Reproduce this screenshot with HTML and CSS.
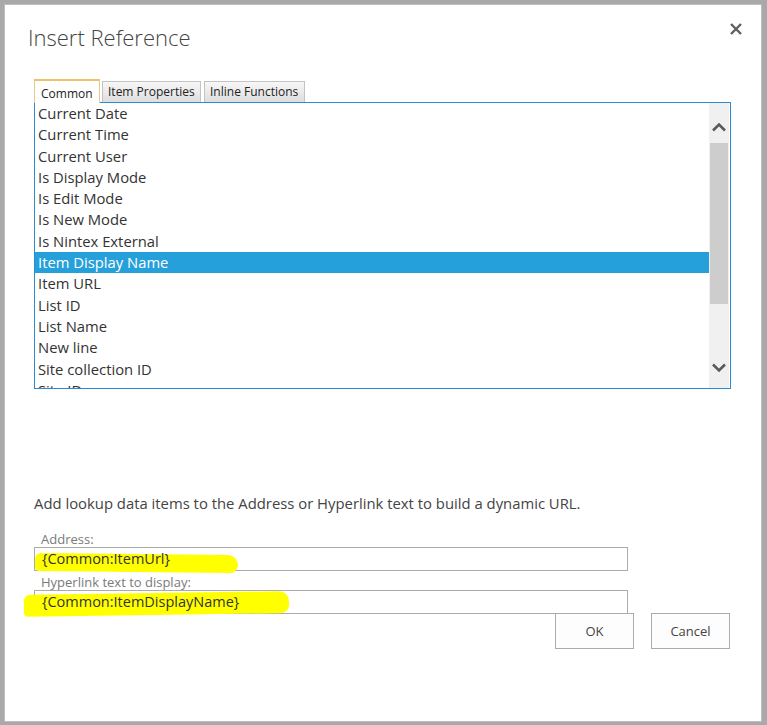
FILE: index.html
```html
<!DOCTYPE html>
<html>
<head>
<meta charset="utf-8">
<title>Insert Reference</title>
<link rel="stylesheet" href="styles.css">
</head>
<body>
<div class="backdrop">
  <div class="dialog">
    <div class="header">
      <h1 class="title">Insert Reference</h1>
      <button class="close" aria-label="Close">
        <svg width="14" height="14" viewBox="0 0 14 14"><path d="M2 2 L12 12 M12 2 L2 12" stroke="#5f5f5f" stroke-width="2.4" fill="none"/></svg>
      </button>
    </div>

    <div class="tabs">
      <div class="tab active">Common</div>
      <div class="tab">Item Properties</div>
      <div class="tab">Inline Functions</div>
    </div>

    <div class="listbox">
      <ul class="items">
        <li>Current Date</li>
        <li>Current Time</li>
        <li>Current User</li>
        <li>Is Display Mode</li>
        <li>Is Edit Mode</li>
        <li>Is New Mode</li>
        <li>Is Nintex External</li>
        <li class="selected">Item Display Name</li>
        <li>Item URL</li>
        <li>List ID</li>
        <li>List Name</li>
        <li>New line</li>
        <li>Site collection ID</li>
        <li>Site ID</li>
      </ul>
      <div class="scrollbar">
        <div class="arrow">
          <svg width="16" height="10" viewBox="0 0 16 10"><polyline points="2,8.5 8,2.5 14,8.5" stroke="#5a5a5a" stroke-width="2.6" fill="none"/></svg>
        </div>
        <div class="track"><div class="thumb"></div></div>
        <div class="arrow">
          <svg width="16" height="10" viewBox="0 0 16 10"><polyline points="2,1.5 8,7.5 14,1.5" stroke="#5a5a5a" stroke-width="2.6" fill="none"/></svg>
        </div>
      </div>
    </div>

    <p class="hint">Add lookup data items to the Address or Hyperlink text to build a dynamic URL.</p>

    <div class="field">
      <label class="label">Address:</label>
      <div class="input"><span class="mark mark-1"></span><span class="value">{Common:ItemUrl}</span></div>
    </div>
    <div class="field">
      <label class="label">Hyperlink text to display:</label>
      <div class="input"><span class="mark mark-2"></span><span class="value">{Common:ItemDisplayName}</span></div>
    </div>

    <div class="buttons">
      <button class="btn">OK</button>
      <button class="btn">Cancel</button>
    </div>
  </div>
</div>
</body>
</html>
```

FILE: styles.css
```css
* { box-sizing: border-box; }

html, body {
  margin: 0;
  padding: 0;
}

body {
  width: 767px;
  height: 725px;
  overflow: hidden;
  background: #a9a9a9;
  font-family: "Open Sans", "Noto Sans", sans-serif;
  color: #444;
}

.backdrop {
  width: 767px;
  height: 725px;
  padding: 4px 0 0 4px;
  background: #a9a9a9;
}

.dialog {
  width: 758px;
  height: 718px;
  background: #fff;
  border: 1px solid #bdbdbd;
  padding: 0 0 0 29px;
  position: relative;
}

.header {
  display: flex;
  justify-content: space-between;
  align-items: flex-start;
  height: 73px;
}

.title {
  margin: 18px 0 0 -6px;
  font-weight: 300;
  font-size: 22px;
  line-height: 28px;
  color: #444;
}

.close {
  margin: 17px 18px 0 0;
  padding: 0;
  border: 0;
  background: none;
  width: 14px;
  height: 14px;
  display: flex;
}

.tabs {
  display: flex;
  align-items: flex-end;
  gap: 2px;
  height: 24px;
}

.tab {
  font-size: 12px;
  line-height: 19px;
  height: 21px;
  padding: 0 5px;
  color: #222;
  border: 1px solid #c3c3c3;
  border-bottom: 0;
  background: linear-gradient(#f7f7f7, #dedede);
}

.tab:nth-child(2) { width: 99px; }
.tab:nth-child(3) { width: 101px; margin-left: 1px; }

.tab.active {
  height: 24px;
  padding: 3px 6px 0;
  background: #fff;
  border-top: 2px solid #f0c069;
  border-left: 1px solid #e6c98f;
  border-right: 1px solid #e6c98f;
  width: 66px;
  position: relative;
  z-index: 1;
  margin-bottom: -1px;
}

.listbox {
  width: 697px;
  height: 287px;
  border: 1px solid #2b8bd2;
  display: flex;
  padding: 0 1px 0 0;
}

.items {
  list-style: none;
  margin: 0;
  padding: 0;
  flex: 1;
  overflow: hidden;
}

.items li {
  font-size: 14.8px;
  height: 21.3px;
  line-height: 21.3px;
  padding-left: 3px;
  color: #333;
  white-space: nowrap;
}

.items li.selected {
  background: #26a0da;
  color: #fff;
}

.scrollbar {
  width: 20px;
  background: #f0f0f0;
  display: flex;
  flex-direction: column;
}

.arrow {
  height: 40px;
  display: flex;
  justify-content: center;
}

.scrollbar .arrow:first-child { align-items: center; padding-top: 7px; }
.scrollbar .arrow:last-child { align-items: flex-start; padding-top: 15px; }

.track {
  flex: 1;
  padding: 0 1px;
}

.thumb {
  height: 161px;
  background: #cdcdcd;
}

.hint {
  margin: 104px 0 0 0;
  font-size: 14.85px;
  line-height: 20px;
  color: #444;
}

.label {
  display: block;
  font-size: 13px;
  line-height: 15px;
  color: #7a7a7a;
  padding-left: 7px;
  margin-top: 19px;
}

.field + .field .label { margin-top: 4px; }

.input {
  width: 594px;
  height: 24px;
  border: 1px solid #ababab;
  position: relative;
  padding-left: 7px;
  display: flex;
  align-items: center;
}

.value {
  position: relative;
  font-size: 14.5px;
  color: #333;
  line-height: 20px;
}

.mark {
  position: absolute;
  background: #ffff00;
  border-radius: 6px 10px 8px 4px;
}

.mark-1 {
  left: 0;
  top: 6px;
  width: 203px;
  height: 18px;
  transform: skewY(0.6deg);
}

.mark-2 {
  left: -11px;
  top: 2px;
  width: 265px;
  height: 22px;
  transform: skewY(-0.8deg);
}

.buttons {
  position: absolute;
  top: 608px;
  left: 550px;
  display: flex;
  gap: 17px;
}

.btn {
  width: 79px;
  height: 36px;
  border: 1px solid #ababab;
  background: #fdfdfd;
  font-family: "Open Sans", "Noto Sans", sans-serif;
  font-size: 13px;
  color: #444;
  padding: 0;
}
```
